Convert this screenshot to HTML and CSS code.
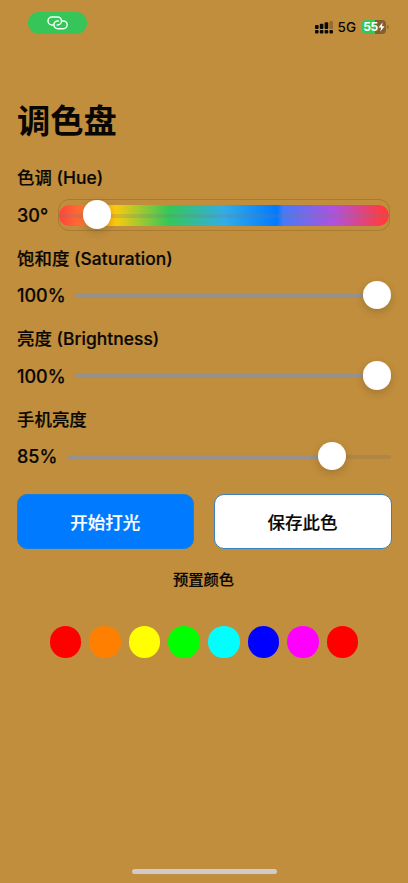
FILE: index.html
```html
<!DOCTYPE html>
<html lang="zh-CN">
<head>
<meta charset="utf-8">
<title>调色盘</title>
<link rel="stylesheet" href="styles.css">
</head>
<body>
<div class="screen">
  <header class="status">
    <div class="pill">
      <svg width="24" height="16" viewBox="0 0 24 16" fill="none" stroke="#f0fff2" stroke-width="1.5" stroke-linecap="round">
        <path d="M7.6 9.9H6A4 4 0 0 1 6 1.900H11.500A4 4 0 0 1 11.500 9.900H11.200"/>
        <path d="M15.900 5.900H17.300A3.900 3.900 0 0 1 17.300 13.700H11.800A3.900 3.900 0 0 1 11.800 5.900H12.300"/>
      </svg>
    </div>
    <div class="status-right">
      <svg width="18" height="13" viewBox="0 0 18 13">
        <g fill="#0b0905">
          <rect x="0" y="4" width="3.600" height="4" rx="1"/><rect x="4.800" y="2.800" width="3.600" height="5.200" rx="1"/><rect x="9.600" y="1.200" width="3.600" height="6.800" rx="1"/>
          <rect x="0" y="9" width="3.600" height="3.600" rx="1"/><rect x="4.800" y="9" width="3.600" height="3.600" rx="1"/><rect x="9.600" y="9" width="3.600" height="3.600" rx="1"/><rect x="14.400" y="9" width="3.600" height="3.600" rx="1"/>
        </g>
        <rect x="14.400" y="0" width="3.600" height="8" rx="1" fill="#946c2e"/>
      </svg>
      <span class="network">5G</span>
      <div class="battery">
        <span>55</span>
        <svg width="7" height="10" viewBox="0 0 7 10"><path d="M4.700 0.300L0.500 5.500H3.200L2.200 9.700L6.600 4.300H3.900Z" fill="#fff"/></svg>
      </div>
      <i class="battery-tip"></i>
    </div>
  </header>
  <main>
    <h1>调色盘</h1>
    <section class="group">
      <h2>色调 (Hue)</h2>
      <div class="row"><span class="value hue-value">30°</span><div class="slider hue"><i class="spectrum"></i><i class="thumb" style="left:24px"></i></div></div>
    </section>
    <section class="group">
      <h2>饱和度 (Saturation)</h2>
      <div class="row"><span class="value wide">100%</span><div class="slider"><i class="track"></i><i class="thumb" style="left:287.500px"></i></div></div>
    </section>
    <section class="group">
      <h2>亮度 (Brightness)</h2>
      <div class="row"><span class="value wide">100%</span><div class="slider"><i class="track"></i><i class="thumb" style="left:287.500px"></i></div></div>
    </section>
    <section class="group">
      <h2>手机亮度</h2>
      <div class="row"><span class="value short">85%</span><div class="slider"><i class="track partial"></i><i class="thumb" style="left:251px"></i></div></div>
    </section>
    <div class="buttons">
      <button class="primary">开始打光</button>
      <button class="secondary">保存此色</button>
    </div>
    <h3>预置颜色</h3>
    <div class="swatches">
      <i class="red"></i><i class="orange"></i><i class="yellow"></i><i class="green"></i><i class="cyan"></i><i class="blue"></i><i class="magenta"></i><i class="red"></i>
    </div>
  </main>
  <div class="home"></div>
</div>
</body>
</html>
```
FILE: styles.css
```css
* { box-sizing: border-box; }
body {
  margin: 0;
  background: #c08e3c;
  color: #090704;
  font-family: Inter, "Noto Sans CJK SC", sans-serif;
}
.screen { height: 883px; display: flex; flex-direction: column; overflow: hidden; }
.status { height: 94px; padding: 12px 19.500px 0 28px; display: flex; justify-content: space-between; align-items: flex-start; }
.pill { width: 59px; height: 22px; border-radius: 11px; background: #35c558; display: flex; justify-content: center; padding-top: 3px; }
.status-right { display: flex; align-items: center; height: 14px; margin-top: 8px; }
.network { font-size: 13.500px; line-height: 14px; font-weight: 500; margin: 0 6px 0 5px; }
.battery { width: 24px; height: 14px; margin-top: -1px; border-radius: 4px; background: linear-gradient(90deg, #35c558 55%, #80602f 55%); color: #fff; display: flex; align-items: center; justify-content: center; font-size: 12px; line-height: 14px; font-weight: 700; flex: none; }
.battery span { letter-spacing: -.4px; }
.battery svg { flex: none; }
.battery-tip { width: 1.500px; height: 4px; margin-left: 1px; border-radius: 0 2px 2px 0; background: #946c2e; }
main { padding: 0 17px 0 17px; flex: 1; }
h1 { margin: 0 0 17px; height: 55px; font-size: 33.300px; line-height: 55px; font-weight: 700; }
.group { height: 66px; margin-bottom: 14.600px; }
.group:first-of-type { margin-top: -1px; }
h2 { margin: 0 0 8px; height: 26px; font-size: 17.400px; line-height: 26px; font-weight: 500; letter-spacing: .05px; -webkit-text-stroke: .2px; }
.row { display: flex; height: 32px; align-items: center; }
.value { font-size: 18px; font-weight: 500; line-height: 32px; flex: none; position: relative; top: .5px; -webkit-text-stroke: .2px; }
.hue-value { width: 40.500px; }
.wide { width: 58px; }
.short { width: 49.500px; }
.slider { position: relative; flex: 1; height: 32px; display: flex; align-items: center; }
.hue { border: 1px solid #a97b31; border-radius: 11px; margin-right: 1.500px; }
.spectrum {
  flex: 1; height: 21px; border-radius: 10.500px;
  background:
    linear-gradient(transparent 9px, rgba(120,120,128,.22) 9px, rgba(120,120,128,.22) 13px, transparent 13px),
    linear-gradient(90deg, #ff443a 0%, #ff8030 9%, #fdca0c 17%, #34c759 33.300%, #32ade6 50%, #007aff 66%, #477af6 68%, #af52de 83.300%, #ff3b40 98%);
}
.track { flex: 1; height: 4px; border-radius: 2px; background: #96908e; }
.partial { background: linear-gradient(90deg, #96908e 82%, #b18645 82%); }
.thumb { position: absolute; top: 1px; width: 28.500px; height: 28.500px; border-radius: 50%; background: #fff; box-shadow: 0 3px 9px rgba(0,0,0,.16); }
.hue .thumb { top: 0; }
.buttons { display: grid; grid-template-columns: 176.500px 178px; justify-content: space-between; height: 55px; margin: 21px -.5px 0 0; }
button { font: inherit; font-size: 17.500px; font-weight: 500; padding: 0; border-radius: 10px; -webkit-text-stroke: .2px; }
.primary { background: #007aff; color: #fff; border: 1px solid #167fe4; }
.secondary { background: #fff; color: #090704; border: 1.500px solid #397fc2; }
h3 { margin: 18px 0 34.500px; height: 25px; line-height: 25px; font-size: 15.300px; font-weight: 500; text-align: center; text-indent: -1px; -webkit-text-stroke: .2px; }
.swatches { display: flex; gap: 8.150px; justify-content: center; }
.swatches i { width: 31.500px; height: 31.500px; border-radius: 50%; }
.red { background: #f00; }
.orange { background: #ff8000; }
.yellow { background: #ff0; }
.green { background: #0f0; }
.cyan { background: #0ff; }
.blue { background: #00f; }
.magenta { background: #f0f; }
.home { width: 145px; height: 5px; border-radius: 3px; background: #d0cbca; align-self: center; margin-bottom: 9px; }
```
